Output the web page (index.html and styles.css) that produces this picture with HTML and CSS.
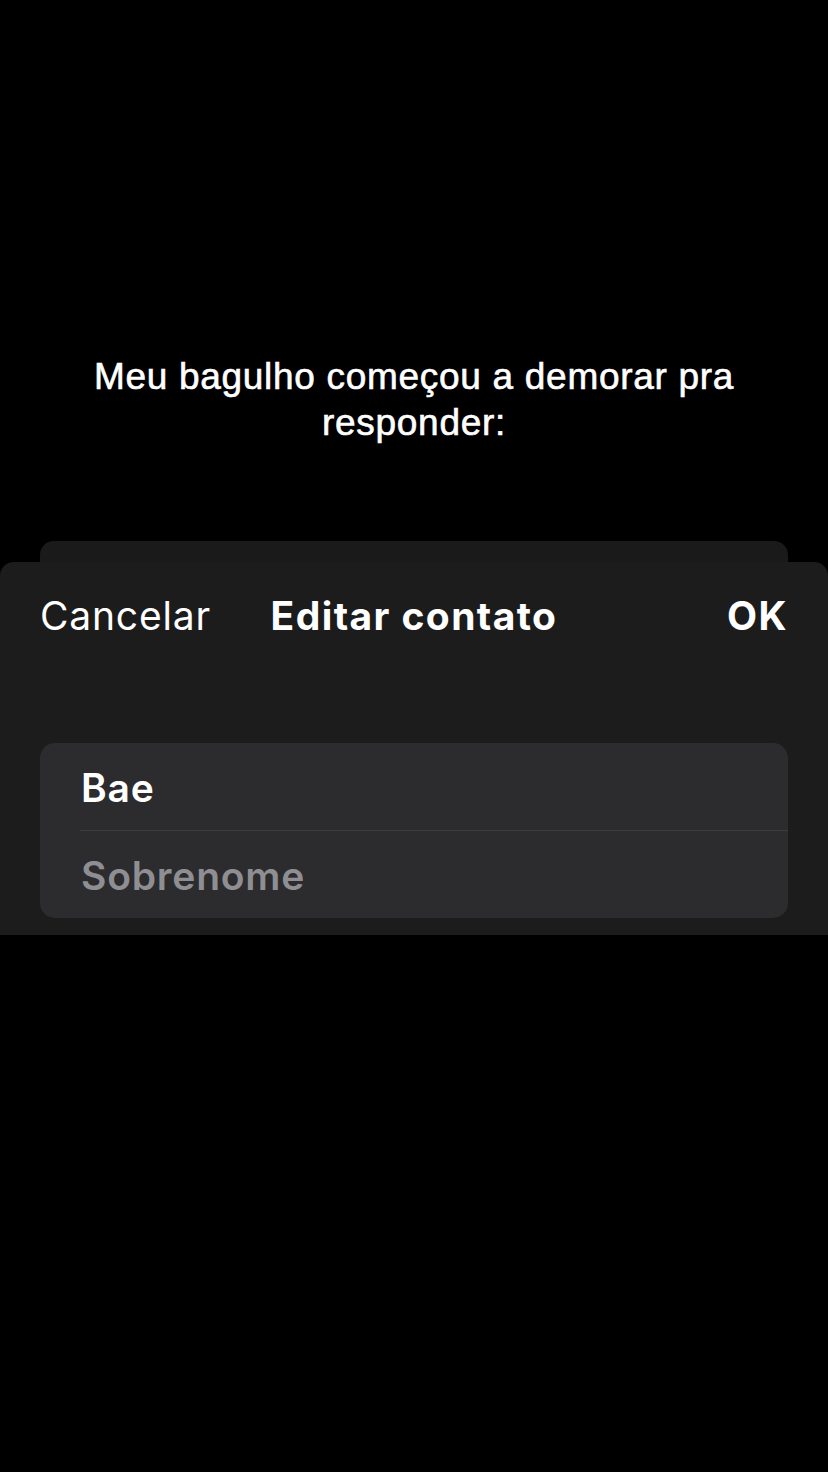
FILE: index.html
```html
<!DOCTYPE html>
<html lang="pt">

<head>
    <meta charset="UTF-8">
    <meta name="viewport" content="width=device-width, initial-scale=1.0">
    <title>Editar contato</title>
    <link rel="stylesheet" href="styles.css">
</head>

<body>
    <p class="caption">Meu bagulho começou a demorar pra<br>responder:</p>

    <div class="sheet-back"></div>

    <!-- folha de editar contato -->
    <div class="sheet">
        <div class="sheet-header">
            <span class="btn-cancel">Cancelar</span>
            <span class="sheet-title">Editar contato</span>
            <span class="btn-ok">OK</span>
        </div>

        <div class="card">
            <div class="row name">Bae</div>
            <div class="row placeholder">Sobrenome</div>
        </div>
    </div>
</body>

</html>
```

FILE: styles.css
```css
/* styles.css */
body {
    margin: 0;
    background-color: #000;
    color: #fff;
    font-family: Inter, "Liberation Sans", sans-serif;
}

.caption {
    margin: 354px 0 0;
    font-family: "Liberation Sans", Arial, sans-serif;
    font-size: 37px;
    line-height: 46px;
    letter-spacing: 0.7px;
    -webkit-text-stroke: 0.6px #fff;
    text-align: center;
    color: #fff;
}

.sheet-back {
    height: 21px;
    margin: 95px 40px 0;
    background-color: #1a1a1a;
    border-radius: 14px 14px 0 0;
}

.sheet {
    height: 373px;
    background-color: #1c1c1c;
    border-radius: 14px 14px 0 0;
    box-sizing: border-box;
    padding-top: 30px;
}

.sheet-header {
    display: grid;
    grid-template-columns: 1fr auto 1fr;
    align-items: baseline;
    padding: 0 40px;
    font-size: 39px;
    line-height: 48px;
    letter-spacing: 0.8px;
}

.btn-cancel {
    justify-self: start;
}

.sheet-title {
    font-weight: 700;
    letter-spacing: 1.4px;
}

.btn-ok {
    justify-self: end;
    font-weight: 700;
    letter-spacing: 1.4px;
}

.card {
    margin: 103px 40px 0;
    background-color: #2c2c2e;
    border-radius: 15px;
    overflow: hidden;
}

.row {
    box-sizing: border-box;
    height: 87px;
    padding: 2px 0 0 41px;
    display: flex;
    align-items: center;
    font-size: 39px;
    letter-spacing: 0.8px;
}

.row + .row {
    height: 88px;
    margin-left: 40px;
    padding-left: 1px;
    border-top: 1px solid #3d3d40;
}

.name {
    font-weight: 600;
}

.placeholder {
    color: #8e8e93;
    font-weight: 600;
}
```
